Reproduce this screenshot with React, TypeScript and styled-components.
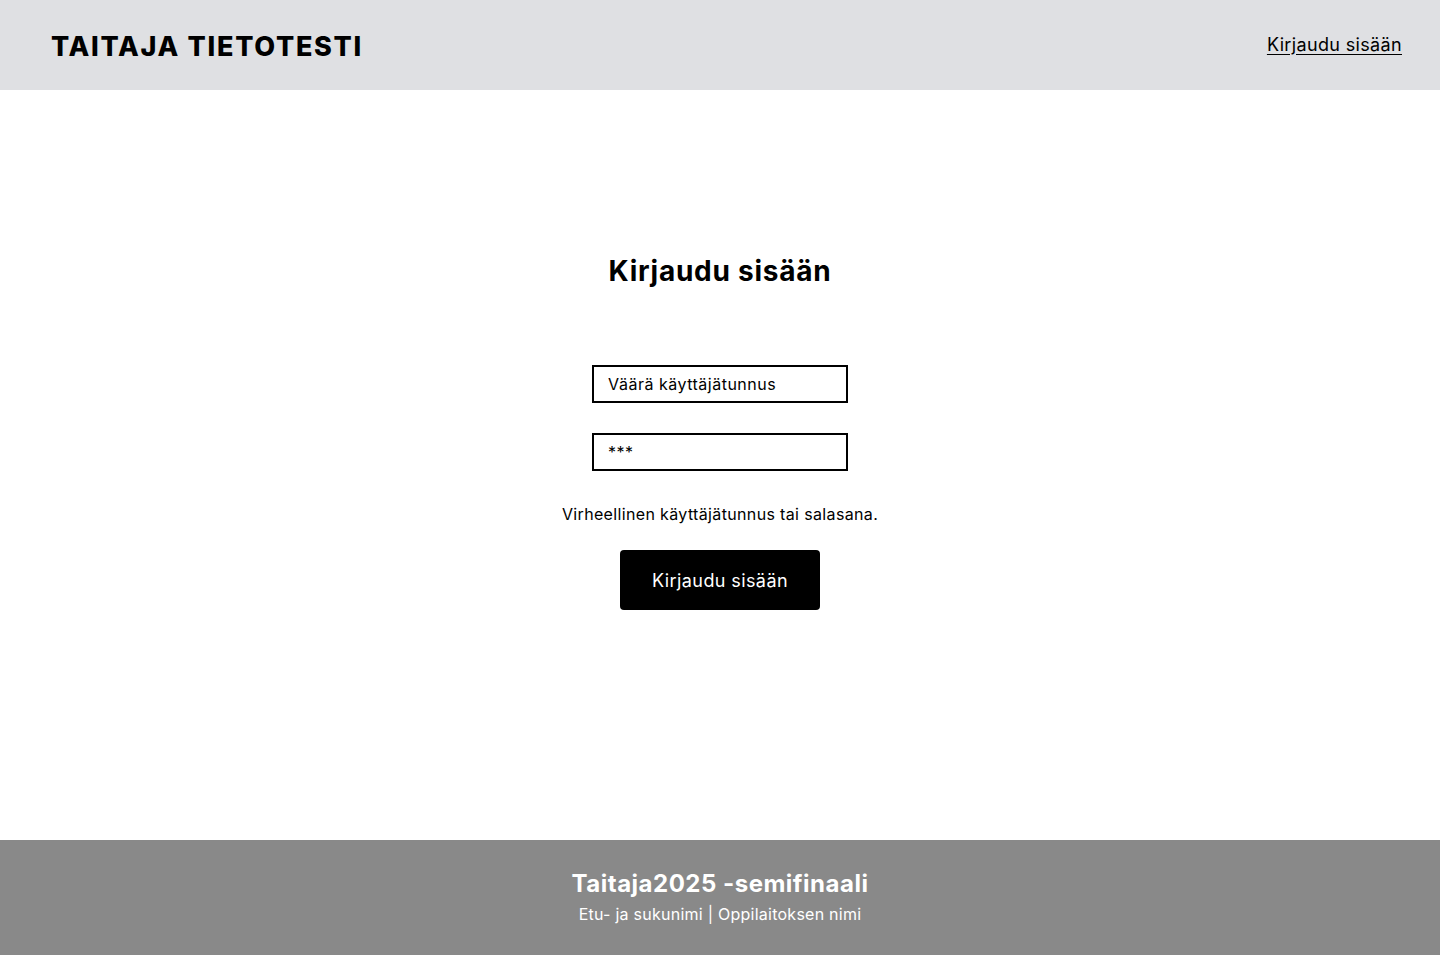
import React, { FC } from 'react';
import styled, { createGlobalStyle } from 'styled-components';

const GlobalStyle = createGlobalStyle`
  html, body {
    margin: 0;
    padding: 0;
  }
  body {
    font-family: Inter, 'Noto Sans', Arial, sans-serif;
    color: #000;
    background: #fff;
  }
`;

const Page = styled.div`
  display: flex;
  flex-direction: column;
  min-height: 955px;
`;

const Header = styled.header`
  height: 90px;
  background: #dfe0e3;
  display: flex;
  align-items: center;
  justify-content: space-between;
  padding: 0 38px 0 51px;
  box-sizing: border-box;
`;

const Logo = styled.div`
  font-size: 27px;
  font-weight: 800;
  letter-spacing: 1.7px;
  padding-top: 2px;
`;

const NavLink = styled.a`
  font-size: 18px;
  letter-spacing: 0.35px;
  color: #000;
  text-decoration: underline;
  text-underline-offset: 3px;
  padding-bottom: 2px;
  cursor: pointer;
`;

const Main = styled.main`
  flex: 1;
  display: flex;
  flex-direction: column;
  align-items: center;
  padding-top: 164px;
`;

const Heading = styled.h1`
  margin: -1px 0 76px;
  font-size: 28px;
  font-weight: 700;
  letter-spacing: 0.75px;
  line-height: 36px;
`;

const Form = styled.form`
  display: flex;
  flex-direction: column;
  align-items: center;
`;

const Input = styled.input`
  width: 256px;
  height: 38px;
  box-sizing: border-box;
  border: 2px solid #000;
  border-radius: 0;
  padding: 0 14px;
  margin-bottom: 30px;
  font-family: inherit;
  font-size: 16px;
  letter-spacing: 0.5px;
  color: #000;
  outline: none;
  background: #fff;
`;

const ErrorText = styled.p`
  margin: 3px 0 26px;
  font-size: 16px;
  letter-spacing: 0.35px;
  line-height: 20px;
`;

const Button = styled.button`
  width: 200px;
  height: 60px;
  background: #000;
  color: #fff;
  border: none;
  border-radius: 4px;
  font-family: inherit;
  font-size: 18px;
  letter-spacing: 0.4px;
  cursor: pointer;
`;

const Footer = styled.footer`
  height: 115px;
  background: #898989;
  color: #fff;
  display: flex;
  flex-direction: column;
  align-items: center;
  justify-content: center;
  gap: 5px;
  padding-bottom: 2px;
  box-sizing: border-box;
`;

const FooterTitle = styled.div`
  font-size: 24px;
  font-weight: 700;
  letter-spacing: 0.5px;
  line-height: 30px;
`;

const FooterText = styled.div`
  font-size: 16px;
  letter-spacing: 0.25px;
  line-height: 20px;
`;

const App: FC = () => (
  <Page>
    <GlobalStyle />
    <Header>
      <Logo>TAITAJA TIETOTESTI</Logo>
      <NavLink>Kirjaudu sisään</NavLink>
    </Header>
    <Main>
      <Heading>Kirjaudu sisään</Heading>
      <Form onSubmit={(e) => e.preventDefault()}>
        <Input type="text" defaultValue="Väärä käyttäjätunnus" />
        <Input type="text" defaultValue="***" />
        <ErrorText>Virheellinen käyttäjätunnus tai salasana.</ErrorText>
        <Button type="submit">Kirjaudu sisään</Button>
      </Form>
    </Main>
    <Footer>
      <FooterTitle>Taitaja2025 -semifinaali</FooterTitle>
      <FooterText>Etu- ja sukunimi | Oppilaitoksen nimi</FooterText>
    </Footer>
  </Page>
);

export default App;
